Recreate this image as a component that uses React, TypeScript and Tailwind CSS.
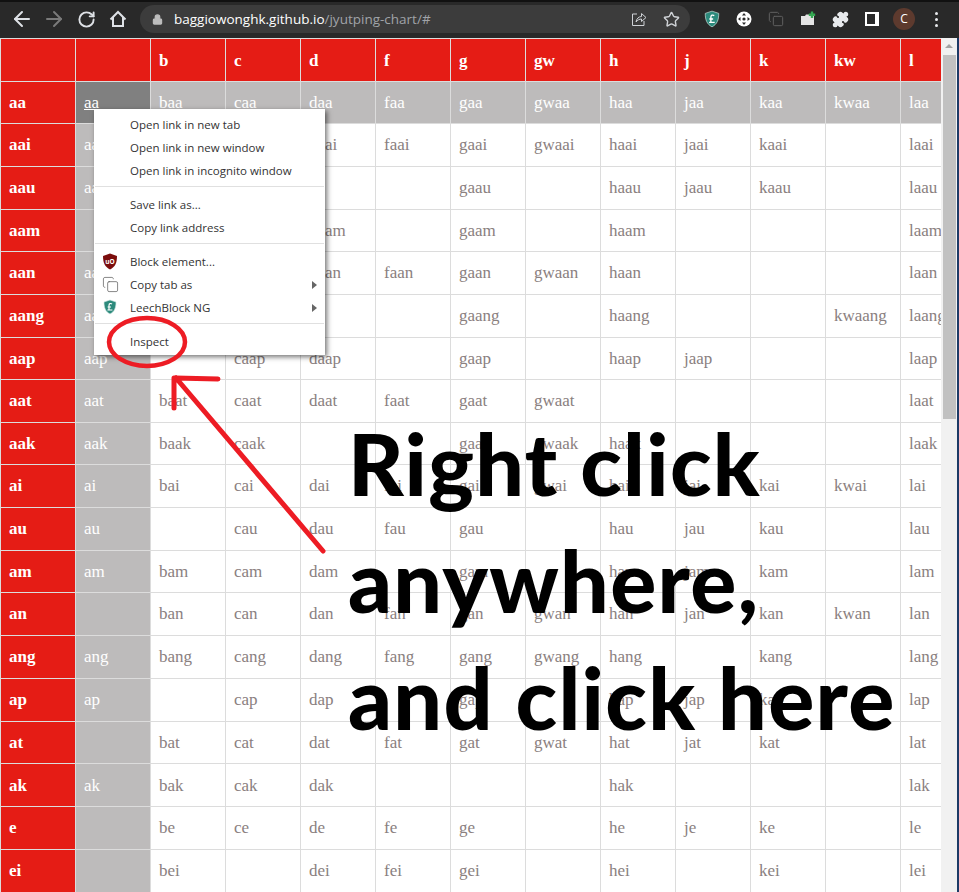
import { ArrowLeft, ArrowRight, RotateCw, Lock, Star, Puzzle, Copy } from "lucide-react";

const initials = ["b", "c", "d", "f", "g", "gw", "h", "j", "k", "kw", "l"];

// label, second column, then one cell per initial ("" = empty)
const rows: string[][] = [
  ["aai", "aai", "baai", "caai", "daai", "faai", "gaai", "gwaai", "haai", "jaai", "kaai", "", "laai"],
  ["aau", "aau", "baau", "caau", "", "", "gaau", "", "haau", "jaau", "kaau", "", "laau"],
  ["aam", "", "baam", "caam", "daam", "", "gaam", "", "haam", "", "", "", "laam"],
  ["aan", "aan", "baan", "caan", "daan", "faan", "gaan", "gwaan", "haan", "", "", "", "laan"],
  ["aang", "aang", "baang", "caang", "", "", "gaang", "", "haang", "", "", "kwaang", "laang"],
  ["aap", "aap", "", "caap", "daap", "", "gaap", "", "haap", "jaap", "", "", "laap"],
  ["aat", "aat", "baat", "caat", "daat", "faat", "gaat", "gwaat", "", "", "", "", "laat"],
  ["aak", "aak", "baak", "caak", "", "", "gaak", "gwaak", "haak", "", "", "", "laak"],
  ["ai", "ai", "bai", "cai", "dai", "fai", "gai", "gwai", "hai", "jai", "kai", "kwai", "lai"],
  ["au", "au", "", "cau", "dau", "fau", "gau", "", "hau", "jau", "kau", "", "lau"],
  ["am", "am", "bam", "cam", "dam", "", "gam", "", "ham", "jam", "kam", "", "lam"],
  ["an", "", "ban", "can", "dan", "fan", "gan", "gwan", "han", "jan", "kan", "kwan", "lan"],
  ["ang", "ang", "bang", "cang", "dang", "fang", "gang", "gwang", "hang", "", "kang", "", "lang"],
  ["ap", "ap", "", "cap", "dap", "", "gap", "", "hap", "jap", "kap", "", "lap"],
  ["at", "", "bat", "cat", "dat", "fat", "gat", "gwat", "hat", "jat", "kat", "", "lat"],
  ["ak", "ak", "bak", "cak", "dak", "", "", "", "hak", "", "", "", "lak"],
  ["e", "", "be", "ce", "de", "fe", "ge", "", "he", "je", "ke", "", "le"],
  ["ei", "", "bei", "", "dei", "fei", "gei", "", "hei", "", "kei", "", "lei"],
];

// rows that land on 42px rather than 43px in the screenshot
const shortRows = ["aai", "aan", "aat", "ai", "am", "an", "aam", "aap", "aak", "at", "e"];

function LeechShield({ size }: { size: number }) {
  return (
    <svg width={size} height={size} viewBox="0 0 16 16">
      <path d="M8 1 L14 3 C14 9 12.5 12.5 8 15 C3.5 12.5 2 9 2 3 Z" fill="#2c8a7c" stroke="#cfe5e0" strokeWidth="0.6" />
      <path d="M10 5 C8.6 4 7 4.6 7 6.4 L7 10.5 M5.6 8 L9 8 M5.4 11 L10.4 11" fill="none" stroke="#fff" strokeWidth="1.2" />
    </svg>
  );
}

function ToolSlot({ children }: { children: React.ReactNode }) {
  return <div className="w-[32px] flex items-center justify-center">{children}</div>;
}

function Toolbar() {
  return (
    <div className="h-[38px] bg-[#292929] border-t-2 border-[#111] pb-[2px] flex items-center text-[#dee1e6]">
      <div className="flex items-center w-[140px] pl-[6px]">
        <ToolSlot>
          <ArrowLeft size={24} strokeWidth={2} />
        </ToolSlot>
        <ToolSlot>
          <ArrowRight size={24} strokeWidth={2} className="text-[#7a7a7a]" />
        </ToolSlot>
        <ToolSlot>
          <RotateCw size={19} strokeWidth={2.4} />
        </ToolSlot>
        <ToolSlot>
          <svg width="18" height="18" viewBox="0 0 18 18" fill="none" stroke="currentColor" strokeWidth="2">
            <path d="M1.5 9.5 L9 2 L16.5 9.5 M4 7.5 V16 H14 V7.5" />
          </svg>
        </ToolSlot>
      </div>
      <div className="w-[550px] h-[28px] rounded-full bg-[#3c3c3c] flex items-center pl-[12px] pr-[10px]">
        <Lock size={11} strokeWidth={2.5} className="text-[#bdbdbd] mr-[11px]" fill="#bdbdbd" />
        <span className="text-[13.5px] font-['Open_Sans',sans-serif] text-white">
          baggiowonghk.github.io<span className="text-[#a0a3a8]">/jyutping-chart/#</span>
        </span>
        <div className="ml-auto flex items-center gap-[16px] text-[#cfd2d6]">
          <svg width="16" height="16" viewBox="0 0 16 16" fill="none" stroke="currentColor" strokeWidth="1">
            <path d="M6 3 H1.5 V14.5 H13 V10 M5 11 C5.5 7.5 8 5.5 10.5 5.5 V2.5 L15 6.5 L10.5 10.5 V8 C8.5 8 6.5 9 5 11 Z" />
          </svg>
          <Star size={17} strokeWidth={2} />
        </div>
      </div>
      <div className="flex items-center ml-[6px]">
        <ToolSlot>
          <LeechShield size={18} />
        </ToolSlot>
        <ToolSlot>
          <svg width="16" height="16" viewBox="0 0 16 16">
            <circle cx="8" cy="8" r="7.5" fill="#fff" />
            <circle cx="8" cy="8" r="1.6" fill="#292929" />
            <path d="M8 2 L10 4.5 H6 Z M8 14 L10 11.5 H6 Z M2 8 L4.5 6 V10 Z M14 8 L11.5 6 V10 Z" fill="#292929" />
          </svg>
        </ToolSlot>
        <ToolSlot>
          <Copy size={16} strokeWidth={1.5} className="text-[#5f5f5f]" />
        </ToolSlot>
        <ToolSlot>
          <svg width="17" height="16" viewBox="0 0 17 16">
            <path d="M1 5 H5 L6 3.5 H14 V14 H1 Z" fill="#e4e4e4" />
            <path d="M12 0.5 V7 M8.8 3.7 H15.2" stroke="#35a853" strokeWidth="2.4" />
          </svg>
        </ToolSlot>
        <ToolSlot>
          <Puzzle size={17} fill="#e8eaed" className="text-[#e8eaed]" />
        </ToolSlot>
        <ToolSlot>
          <div className="w-[14px] h-[14px] bg-white">
            <div className="w-[8px] h-[10px] bg-[#292929] ml-[2px] mt-[2px]" />
          </div>
        </ToolSlot>
        <ToolSlot>
          <div className="w-[22px] h-[22px] rounded-full bg-[#5d3a2e] flex items-center justify-center text-[12px] text-white font-['Open_Sans',sans-serif]">
            C
          </div>
        </ToolSlot>
        <ToolSlot>
          <div className="flex flex-col gap-[3px]">
            <div className="w-[3px] h-[3px] rounded-full bg-[#e8eaed]" />
            <div className="w-[3px] h-[3px] rounded-full bg-[#e8eaed]" />
            <div className="w-[3px] h-[3px] rounded-full bg-[#e8eaed]" />
          </div>
        </ToolSlot>
      </div>
    </div>
  );
}

function Chart() {
  const border = "border border-[#dcdcdc]";
  return (
    <table className="table-fixed border-collapse w-[975px] text-[17px] font-['Liberation_Serif',serif] leading-none">
      <tbody>
        <tr className="h-[43px] bg-[#e51c15] text-white font-bold">
          <th className={`w-[75px] ${border}`} />
          <th className={`w-[75px] ${border}`} />
          {initials.map((c) => (
            <th key={c} className={`w-[75px] px-2 text-left ${border}`}>
              {c}
            </th>
          ))}
        </tr>
        <tr className="h-[42px] bg-[#bdbbbb] text-white">
          <th className={`px-2 text-left bg-[#e51c15] ${border}`}>aa</th>
          <td className={`px-2 bg-[#808080] underline ${border}`}>aa</td>
          {["baa", "caa", "daa", "faa", "gaa", "gwaa", "haa", "jaa", "kaa", "kwaa", "laa"].map((c) => (
            <td key={c} className={`px-2 ${border}`}>
              {c}
            </td>
          ))}
        </tr>
        {rows.map((r) => (
          <tr key={r[0]} className={shortRows.includes(r[0]) ? "h-[42.5px]" : "h-[43px]"}>
            <th className={`px-2 text-left bg-[#e51c15] text-white ${border}`}>{r[0]}</th>
            <td className={`px-2 bg-[#bdbbbb] text-white ${border}`}>{r[1]}</td>
            {r.slice(2).map((c, i) => (
              <td key={i} className={`px-2 whitespace-nowrap bg-white text-[#8a8080] ${border}`}>
                {c}
              </td>
            ))}
          </tr>
        ))}
      </tbody>
    </table>
  );
}

function MenuItem({ label, icon, more }: { label: string; icon?: React.ReactNode; more?: boolean }) {
  return (
    <div className="h-[23px] flex items-center relative pl-[36px] pr-[8px] text-[11.5px] text-[#333]">
      {icon && <span className="absolute left-[8px] top-[3px]">{icon}</span>}
      <span>{label}</span>
      {more && <span className="ml-auto w-0 h-0 border-y-[4px] border-y-transparent border-l-[5px] border-l-[#666]" />}
    </div>
  );
}

function MenuSeparator() {
  return <div className="h-px bg-[#e0e0e0] mx-px mt-[4px] mb-[6px]" />;
}

function ContextMenu() {
  return (
    <div className="absolute left-[94px] top-[109px] w-[231px] h-[246px] bg-white shadow-[2px_2px_5px_rgba(0,0,0,0.55)] font-['Open_Sans',sans-serif] pt-[4px]">
      <MenuItem label="Open link in new tab" />
      <MenuItem label="Open link in new window" />
      <MenuItem label="Open link in incognito window" />
      <MenuSeparator />
      <MenuItem label="Save link as..." />
      <MenuItem label="Copy link address" />
      <MenuSeparator />
      <MenuItem
        label="Block element..."
        icon={
          <svg width="16" height="17" viewBox="0 0 16 17">
            <path d="M8 0.5 L15 3 C15 10 13 14 8 16.5 C3 14 1 10 1 3 Z" fill="#7b0d0d" />
            <text x="8" y="10.5" fontSize="6.5" fontWeight="700" fill="#fff" textAnchor="middle" fontFamily="Open Sans">
              uO
            </text>
          </svg>
        }
      />
      <MenuItem label="Copy tab as" more icon={<Copy size={17} strokeWidth={1} className="text-[#555]" />} />
      <MenuItem label="LeechBlock NG" more icon={<LeechShield size={16} />} />
      <MenuSeparator />
      <MenuItem label="Inspect" />
    </div>
  );
}

export default function App() {
  return (
    <div className="relative w-[959px] h-[892px] overflow-hidden bg-white">
      <Toolbar />
      <div className="flex h-[854px]">
        <div className="w-[941px] overflow-hidden">
          <Chart />
        </div>
        <div className="w-[16px] bg-[#f1f1f1] flex flex-col items-center">
          <div className="mt-[6px] w-0 h-0 border-x-[4px] border-x-transparent border-b-[4px] border-b-[#a3a3a3]" />
          <div className="mt-[7px] w-[13px] h-[364px] bg-[#c1c1c1]" />
        </div>
        <div className="w-[2px] bg-[#1c3a66]" />
      </div>
      <ContextMenu />
      <svg className="absolute left-0 top-0 pointer-events-none" width="959" height="892" fill="none" stroke="#ed1c24" strokeLinecap="round">
        <ellipse cx="147" cy="342" rx="38" ry="24" strokeWidth="4.5" />
        <path d="M323 551 L176 378 M175 378 L218 379 M174 378 L174 408" strokeWidth="5" />
      </svg>
      <div className="absolute left-[348px] top-[404px] font-['Lato',sans-serif] font-black text-black text-[86px] tracking-[1.3px] leading-[117px] whitespace-nowrap pointer-events-none">
        <div>Right click</div>
        <div>anywhere,</div>
        <div>and click here</div>
      </div>
    </div>
  );
}
